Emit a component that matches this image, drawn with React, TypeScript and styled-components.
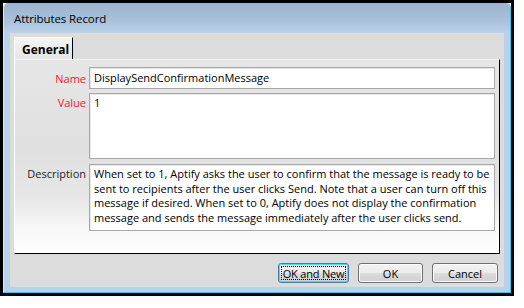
import React from 'react';
import styled, { createGlobalStyle } from 'styled-components';

const GlobalStyle = createGlobalStyle`
  body {
    margin: 0;
    background: #ffffff;
    font-family: "Open Sans", "DejaVu Sans", sans-serif;
  }
`

const description = [
  'When set to 1, Aptify asks the user to confirm that the message is ready to be',
  'sent to recipients after the user clicks Send. Note that a user can turn off this',
  'message if desired. When set to 0, Aptify does not display the confirmation',
  'message and sends the message immediately after the user clicks send.',
]

function App() {
  return (
    <>
      <GlobalStyle />
      <Screen>
        <Window>
          <TitleBar>
            <Title>Attributes Record</Title>
          </TitleBar>
          <Client>
            <TabStrip>
              <Tab>General</Tab>
            </TabStrip>
            <Panel>
              <Row>
                <Label $required>Name</Label>
                <TextBox>DisplaySendConfirmationMessage</TextBox>
              </Row>
              <Row>
                <Label $required $top>Value</Label>
                <TextArea $height={66}>1</TextArea>
              </Row>
              <Row>
                <Label $top>Description</Label>
                <TextArea $height={67}>{description.join('\n')}</TextArea>
              </Row>
            </Panel>
            <ButtonRow>
              <Button $focused><FocusRing>OK and New</FocusRing></Button>
              <Button $width={65}>OK</Button>
              <Button $width={66}>Cancel</Button>
            </ButtonRow>
          </Client>
        </Window>
      </Screen>
    </>
  );
}

const Screen = styled.div`
  width: 514px;
  height: 296px;
  box-sizing: border-box;
  border: 3px solid #000;
  display: flex;
`

const Window = styled.div`
  flex: 1;
  display: flex;
  flex-direction: column;
  background: #b9d1ea;
  border-radius: 5px 5px 0 0;
  border-left: 1px solid #dbe8f5;
  border-right: 1px solid #3fc4ec;
  border-bottom: 1px solid #3fc4ec;
`

const TitleBar = styled.div`
  height: 30px;
  display: flex;
  align-items: center;
  padding-left: 10px;
  padding-top: 1px;
  box-sizing: border-box;
  background: linear-gradient(#9db4ce, #a9c1db 60%, #b9d1ea);
  border-radius: 5px 5px 0 0;
`

const Title = styled.span`
  font-size: 11.5px;
  letter-spacing: -0.1px;
  color: #000;
`

const Client = styled.div`
  height: 254px;
  margin: 0 6px 0 6px;
  padding: 4px 4px 0 4px;
  box-sizing: border-box;
  background: #dcdcdc;
  display: flex;
  flex-direction: column;
`

const TabStrip = styled.div`
  height: 22px;
  display: flex;
`

const Tab = styled.div`
  width: 59px;
  box-sizing: border-box;
  padding: 3px 0 0 7px;
  font-size: 12px;
  font-weight: 700;
  color: #000;
  background: linear-gradient(#f4f4f4, #e6e6e6);
  border-top: 1px solid #ffffff;
  border-left: 1px solid #ffffff;
  border-right: 1px solid #000;
`

const Panel = styled.div`
  height: 195px;
  box-sizing: border-box;
  display: flex;
  flex-direction: column;
  gap: 4px;
  padding: 7px 4px 0 0;
  background: linear-gradient(#e6e6e6, #e0e0e0 45%, #e6e6e6 70%, #f8f8f8 88%, #ffffff);
  border-top: 1px solid #f4f4f4;
  border-left: 1px solid #ffffff;
  border-right: 1px solid #000;
  border-bottom: 1px solid #000;
`

const Row = styled.div`
  display: flex;
  gap: 3px;
  &:last-child {
    margin-top: 1px;
  }
`

const Label = styled.div<{ $required?: boolean; $top?: boolean }>`
  width: 71px;
  flex-shrink: 0;
  text-align: right;
  font-size: 11px;
  line-height: 15px;
  align-self: ${p => (p.$top ? 'flex-start' : 'center')};
  padding-top: ${p => (p.$top ? '2px' : '0')};
  color: ${p => (p.$required ? '#f0202a' : '#1e1e1e')};
`

const TextBox = styled.div`
  flex: 1;
  height: 22px;
  box-sizing: border-box;
  padding: 2px 4px 0;
  font-size: 11px;
  line-height: 16px;
  color: #000;
  background: #fff;
  border: 1px solid #a8a8a8;
  box-shadow: inset 1px 1px 0 #e8e8e8;
`

const TextArea = styled(TextBox)<{ $height: number }>`
  height: ${p => p.$height}px;
  white-space: pre-line;
  line-height: 14.7px;
`

const ButtonRow = styled.div`
  display: flex;
  justify-content: flex-end;
  gap: 9px;
  margin-top: 9px;
  padding-right: 2px;
`

const Button = styled.div<{ $width?: number; $focused?: boolean }>`
  width: ${p => p.$width ?? 71}px;
  height: 20px;
  box-sizing: border-box;
  display: flex;
  align-items: center;
  justify-content: center;
  white-space: nowrap;
  font-size: 11px;
  color: #000;
  border-radius: 3px;
  border: 1px solid ${p => (p.$focused ? '#3c7fb1' : '#707070')};
  background: linear-gradient(#f3f3f3, #ebebeb 50%, #dddddd 51%, #cfcfcf);
  box-shadow: inset 0 0 0 1px ${p => (p.$focused ? '#48d8fb' : '#fbfbfb')};
`

const FocusRing = styled.span`
  display: flex;
  align-items: center;
  justify-content: center;
  width: calc(100% - 4px);
  height: calc(100% - 4px);
  box-sizing: border-box;
  border: 1px dotted #000;
  letter-spacing: -0.2px;
`

export default App;
